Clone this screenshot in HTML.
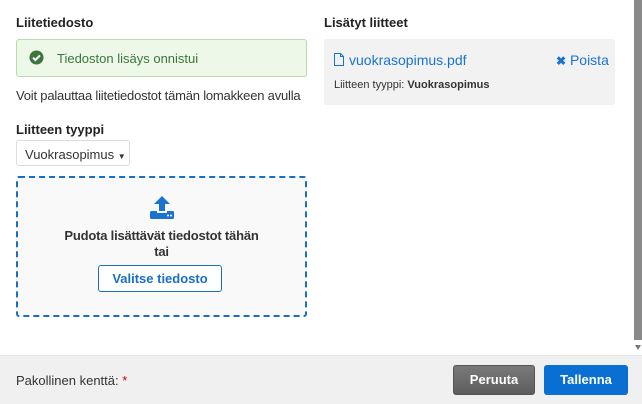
<!DOCTYPE html>
<html><head><style>
*{box-sizing:border-box;margin:0;padding:0}
body{width:642px;height:404px;overflow:hidden;background:#fff;font-family:"Liberation Sans",Arial,sans-serif;color:#333;font-size:13px;position:relative}
.a{position:absolute}
h3{font-size:13px;font-weight:bold;color:#222}
</style></head><body>
<h3 class="a" style="left:16px;top:15px">Liitetiedosto</h3>
<div class="a" style="left:16px;top:39px;width:291px;height:38px;background:#eef8e8;border:1px solid #b8dca6;border-radius:3px"></div>
<svg class="a" style="left:29px;top:50px" width="15" height="15" viewBox="0 0 16 16"><circle cx="8" cy="8" r="7.5" fill="#3c763d"/><path d="M4.3 8.2l2.5 2.5 4.9-5" stroke="#fff" stroke-width="2.2" fill="none"/></svg>
<div class="a" style="left:57px;top:51px;color:#3c763d">Tiedoston lisäys onnistui</div>
<div class="a" style="left:16px;top:88px;color:#333;letter-spacing:-0.2px">Voit palauttaa liitetiedostot tämän lomakkeen avulla</div>
<h3 class="a" style="left:16px;top:122px">Liitteen tyyppi</h3>
<div class="a" style="left:16px;top:140px;width:114px;height:26px;border:1px solid #ddd;border-radius:3px;background:#fff;padding:6px 0 0 8px">Vuokrasopimus <span style="font-size:8px">▼</span></div>
<div class="a" style="left:16px;top:176px;width:291px;height:141px;border:2px dashed #1a6fc4;border-radius:3px;background:#f9f9f9"></div>
<svg class="a" style="left:149px;top:196px" width="26" height="24" viewBox="0 0 26 24"><path d="M13 0l8 8h-5v7h-6V8H5z" fill="#1a73d1"/><rect x="1" y="15" width="24" height="8" rx="1.5" fill="#1a73d1"/><rect x="8" y="15" width="10" height="2" fill="#f9f9f9"/><circle cx="19" cy="19.5" r="1" fill="#fff"/><circle cx="22" cy="19.5" r="1" fill="#fff"/></svg>
<div class="a" style="left:16px;top:228px;width:291px;text-align:center;font-weight:bold;line-height:16px;color:#333;letter-spacing:-0.2px">Pudota lisättävät tiedostot tähän<br>tai</div>
<div class="a" style="left:98px;top:265px;width:124px;height:27px;border:1px solid #1a6fc4;border-radius:3px;background:#fff;color:#1a6fc4;font-weight:bold;text-align:center;line-height:25px">Valitse tiedosto</div>

<h3 class="a" style="left:324px;top:15px">Lisätyt liitteet</h3>
<div class="a" style="left:324px;top:39px;width:291px;height:66px;background:#f2f2f2;border-radius:3px"></div>
<svg class="a" style="left:334px;top:53px" width="10" height="13" viewBox="0 0 10 13"><path d="M.5.5h6l3 3v9h-9z M6.5.5v3h3" fill="none" stroke="#1a73d1"/></svg>
<div class="a" style="left:349px;top:52px;color:#1a73d1;font-size:14px">vuokrasopimus.pdf</div>
<div class="a" style="left:556px;top:52px;color:#1a73d1;font-size:14px"><b style="font-size:12px">✖</b> Poista</div>
<div class="a" style="left:334px;top:79px;font-size:11px;color:#333">Liitteen tyyppi: <b>Vuokrasopimus</b></div>

<div class="a" style="left:634px;top:0;width:8px;height:340px;background:#8a8a8a"></div>
<div class="a" style="left:635px;top:345px;width:0;height:0;border-left:3px solid transparent;border-right:3px solid transparent;border-top:5px solid #777"></div>

<div class="a" style="left:0;top:355px;width:642px;height:49px;background:#f0f0f0;border-top:1px solid #e4e4e4"></div>
<div class="a" style="left:16px;top:373px;color:#333">Pakollinen kenttä: <span style="color:#c00">*</span></div>
<div class="a" style="left:453px;top:365px;width:82px;height:30px;background:linear-gradient(#7a7a7a,#5e5e5e);border:1px solid #555;border-radius:3px;color:#fff;font-weight:bold;text-align:center;line-height:28px">Peruuta</div>
<div class="a" style="left:544px;top:365px;width:84px;height:30px;background:#0a6fd3;border-radius:3px;color:#fff;font-weight:bold;text-align:center;line-height:30px">Tallenna</div>
</body></html>
